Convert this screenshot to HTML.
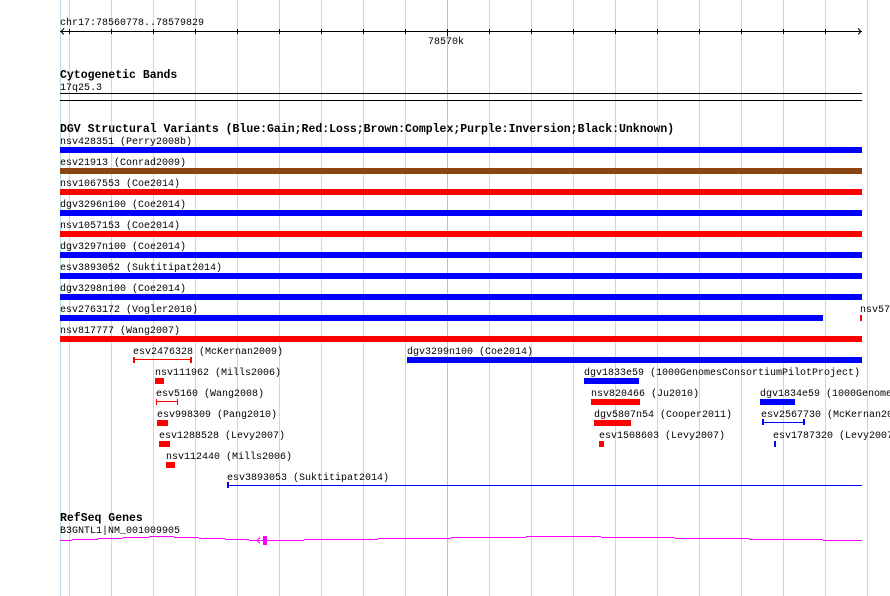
<!DOCTYPE html>
<html><head><meta charset="utf-8"><style>
html,body{margin:0;padding:0;background:#fff;width:890px;height:596px;overflow:hidden}
svg{display:block}
text{font-family:"Liberation Mono","DejaVu Sans Mono",monospace;font-size:10px;fill:#000}
.b{font-weight:bold;font-size:11.5px}
</style></head><body>
<svg width="890" height="596" viewBox="0 0 890 596" xmlns="http://www.w3.org/2000/svg" shape-rendering="crispEdges">
<rect width="890" height="596" fill="#fff"/>
<g stroke="#b0e2e6" stroke-width="1">
<line x1="60.5" y1="0" x2="60.5" y2="596"/>
<line x1="69.5" y1="0" x2="69.5" y2="596"/>
<line x1="111.5" y1="0" x2="111.5" y2="596"/>
<line x1="153.5" y1="0" x2="153.5" y2="596"/>
<line x1="195.5" y1="0" x2="195.5" y2="596"/>
<line x1="237.5" y1="0" x2="237.5" y2="596"/>
<line x1="279.5" y1="0" x2="279.5" y2="596"/>
<line x1="321.5" y1="0" x2="321.5" y2="596"/>
<line x1="363.5" y1="0" x2="363.5" y2="596"/>
<line x1="405.5" y1="0" x2="405.5" y2="596"/>
<line x1="447.5" y1="0" x2="447.5" y2="596" stroke="#9cd0e0"/>
<line x1="489.5" y1="0" x2="489.5" y2="596"/>
<line x1="531.5" y1="0" x2="531.5" y2="596"/>
<line x1="573.5" y1="0" x2="573.5" y2="596"/>
<line x1="615.5" y1="0" x2="615.5" y2="596"/>
<line x1="657.5" y1="0" x2="657.5" y2="596"/>
<line x1="699.5" y1="0" x2="699.5" y2="596"/>
<line x1="741.5" y1="0" x2="741.5" y2="596"/>
<line x1="783.5" y1="0" x2="783.5" y2="596"/>
<line x1="825.5" y1="0" x2="825.5" y2="596"/>
<line x1="867.5" y1="0" x2="867.5" y2="596"/>
</g>
<!-- ruler -->
<text x="60" y="25">chr17:78560778..78579829</text>
<g stroke="#000" stroke-width="1">
<line x1="60" y1="31.5" x2="862" y2="31.5"/>
<path d="M64 28.5 L61 31.5 L64 34.5" fill="none"/>
<path d="M858 28.5 L861 31.5 L858 34.5" fill="none"/>
<line x1="69.5" y1="29" x2="69.5" y2="34"/><line x1="111.5" y1="29" x2="111.5" y2="34"/><line x1="153.5" y1="29" x2="153.5" y2="34"/><line x1="195.5" y1="29" x2="195.5" y2="34"/><line x1="237.5" y1="29" x2="237.5" y2="34"/><line x1="279.5" y1="29" x2="279.5" y2="34"/><line x1="321.5" y1="29" x2="321.5" y2="34"/><line x1="363.5" y1="29" x2="363.5" y2="34"/><line x1="405.5" y1="29" x2="405.5" y2="34"/><line x1="447.5" y1="29" x2="447.5" y2="36"/><line x1="489.5" y1="29" x2="489.5" y2="34"/><line x1="531.5" y1="29" x2="531.5" y2="34"/><line x1="573.5" y1="29" x2="573.5" y2="34"/><line x1="615.5" y1="29" x2="615.5" y2="34"/><line x1="657.5" y1="29" x2="657.5" y2="34"/><line x1="699.5" y1="29" x2="699.5" y2="34"/><line x1="741.5" y1="29" x2="741.5" y2="34"/><line x1="783.5" y1="29" x2="783.5" y2="34"/><line x1="825.5" y1="29" x2="825.5" y2="34"/>
</g>
<text x="428" y="44">78570k</text>
<!-- cyto -->
<text x="60" y="78" class="b">Cytogenetic Bands</text>
<text x="60" y="90">17q25.3</text>
<rect x="60" y="93" width="802" height="1" fill="#000"/>
<rect x="60" y="100" width="802" height="1" fill="#000"/>
<!-- DGV -->
<text x="60" y="132" class="b">DGV Structural Variants (Blue:Gain;Red:Loss;Brown:Complex;Purple:Inversion;Black:Unknown)</text>
<text x="60" y="144">nsv428351 (Perry2008b)</text>
<rect x="60" y="147" width="802" height="6" fill="#0000ff"/>
<text x="60" y="165">esv21913 (Conrad2009)</text>
<rect x="60" y="168" width="802" height="6" fill="#8b4513"/>
<text x="60" y="186">nsv1067553 (Coe2014)</text>
<rect x="60" y="189" width="802" height="6" fill="#ff0000"/>
<text x="60" y="207">dgv3296n100 (Coe2014)</text>
<rect x="60" y="210" width="802" height="6" fill="#0000ff"/>
<text x="60" y="228">nsv1057153 (Coe2014)</text>
<rect x="60" y="231" width="802" height="6" fill="#ff0000"/>
<text x="60" y="249">dgv3297n100 (Coe2014)</text>
<rect x="60" y="252" width="802" height="6" fill="#0000ff"/>
<text x="60" y="270">esv3893052 (Suktitipat2014)</text>
<rect x="60" y="273" width="802" height="6" fill="#0000ff"/>
<text x="60" y="291">dgv3298n100 (Coe2014)</text>
<rect x="60" y="294" width="802" height="6" fill="#0000ff"/>
<text x="60" y="312">esv2763172 (Vogler2010)</text>
<rect x="60" y="315" width="763" height="6" fill="#0000ff"/>
<text x="860" y="312">nsv57</text>
<rect x="860" y="315" width="2" height="6" fill="#ff0000"/>
<text x="60" y="333">nsv817777 (Wang2007)</text>
<rect x="60" y="336" width="802" height="6" fill="#ff0000"/>

<text x="133" y="354">esv2476328 (McKernan2009)</text>
<rect x="133" y="359" width="58" height="1" fill="#ff0000"/>
<rect x="133" y="357" width="2" height="6" fill="#ff0000"/><rect x="190" y="357" width="2" height="6" fill="#ff0000"/>
<text x="407" y="354">dgv3299n100 (Coe2014)</text>
<rect x="407" y="357" width="455" height="6" fill="#0000ff"/>

<text x="155" y="375">nsv111962 (Mills2006)</text>
<rect x="155" y="378" width="9" height="6" fill="#ff0000"/>
<text x="584" y="375">dgv1833e59 (1000GenomesConsortiumPilotProject)</text>
<rect x="584" y="378" width="55" height="6" fill="#0000ff"/>

<text x="156" y="396">esv5160 (Wang2008)</text>
<rect x="156" y="401" width="22" height="1" fill="#ff0000"/>
<rect x="156" y="399" width="1" height="6" fill="#ff0000"/><rect x="177" y="399" width="1" height="6" fill="#ff0000"/>
<text x="591" y="396">nsv820466 (Ju2010)</text>
<rect x="591" y="399" width="49" height="6" fill="#ff0000"/>
<text x="760" y="396">dgv1834e59 (1000Genomes</text>
<rect x="760" y="399" width="35" height="6" fill="#0000ff"/>

<text x="157" y="417">esv998309 (Pang2010)</text>
<rect x="157" y="420" width="11" height="6" fill="#ff0000"/>
<text x="594" y="417">dgv5807n54 (Cooper2011)</text>
<rect x="594" y="420" width="37" height="6" fill="#ff0000"/>
<text x="761" y="417">esv2567730 (McKernan20</text>
<rect x="762" y="422" width="43" height="1" fill="#0000ff"/>
<rect x="762" y="419" width="2" height="6" fill="#0000ff"/><rect x="803" y="419" width="2" height="6" fill="#0000ff"/>

<text x="159" y="438">esv1288528 (Levy2007)</text>
<rect x="159" y="441" width="11" height="6" fill="#ff0000"/>
<text x="599" y="438">esv1508603 (Levy2007)</text>
<rect x="599" y="441" width="5" height="6" fill="#ff0000"/>
<text x="773" y="438">esv1787320 (Levy2007</text>
<rect x="774" y="441" width="2" height="6" fill="#0000ff"/>

<text x="166" y="459">nsv112440 (Mills2006)</text>
<rect x="166" y="462" width="9" height="6" fill="#ff0000"/>

<text x="227" y="480">esv3893053 (Suktitipat2014)</text>
<rect x="227" y="485" width="635" height="1" fill="#0000ff"/>
<rect x="227" y="482" width="2" height="6" fill="#0000ff"/>

<!-- RefSeq -->
<text x="60" y="521" class="b">RefSeq Genes</text>
<text x="60" y="533">B3GNTL1|NM_001009905</text>
<g fill="#ff00ff">
<rect x="60" y="540" width="12" height="1"/>
<rect x="72" y="539" width="26" height="1"/>
<rect x="98" y="538" width="25" height="1"/>
<rect x="123" y="537" width="26" height="1"/>
<rect x="149" y="536" width="25" height="1"/>
<rect x="174" y="537" width="25" height="1"/>
<rect x="199" y="538" width="26" height="1"/>
<rect x="225" y="539" width="24" height="1"/>
<rect x="249" y="540" width="14" height="1"/>
<rect x="263" y="536" width="4" height="9"/>
<rect x="266" y="540" width="38" height="1"/>
<rect x="304" y="539" width="74" height="1"/>
<rect x="378" y="538" width="73" height="1"/>
<rect x="451" y="537" width="75" height="1"/>
<rect x="526" y="536" width="75" height="1"/>
<rect x="601" y="537" width="74" height="1"/>
<rect x="675" y="538" width="74" height="1"/>
<rect x="749" y="539" width="74" height="1"/>
<rect x="823" y="540" width="39" height="1"/>
</g>
<path d="M260 537.5 L257 540.5 L260 543.5" stroke="#ff00ff" fill="none"/>
</svg>
</body></html>
